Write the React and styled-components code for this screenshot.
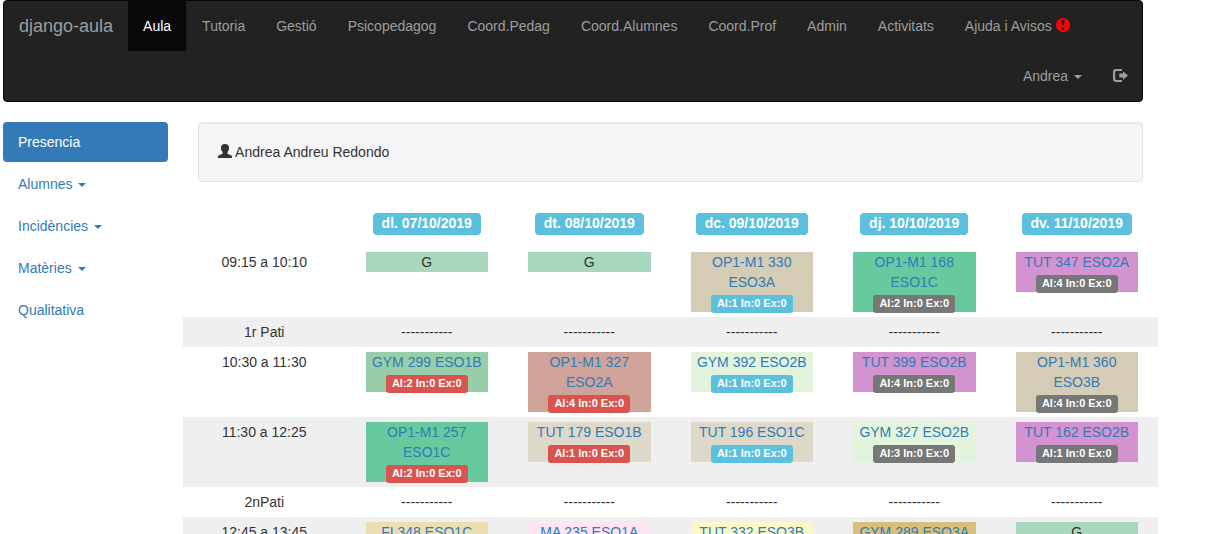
import React from "react";
import styled, { createGlobalStyle } from "styled-components";

const GlobalStyle = createGlobalStyle`
  *, *::before, *::after { box-sizing: border-box; }
  html { scrollbar-width: none; }
  body {
    margin: 0;
    background: #fff;
    color: #333;
    font: 14px/20px "Liberation Sans", Arial, sans-serif;
  }
  a { color: #337ab7; text-decoration: none; }
  ul { list-style: none; margin: 0; padding: 0; }
`;

const Page = styled.div`
  max-width: 1143px;
  padding-left: 3px;
`;

const Navbar = styled.nav`
  display: flex;
  flex-wrap: wrap;
  min-height: 50px;
  margin-bottom: 20px;
  background: #222;
  border: 1px solid #080808;
  border-radius: 4px;
`;

const Brand = styled.a`
  padding: 15px;
  color: #9d9d9d;
  font-size: 18px;
`;

const NavList = styled.ul`
  display: flex;
  gap: 1px;
  margin-left: ${(p) => (p.$end ? "auto" : "0")};
`;

const NavLink = styled.a`
  display: block;
  padding: 15px;
  color: ${(p) => (p.$active ? "#fff" : "#9d9d9d")};
  background: ${(p) => (p.$active ? "#080808" : "transparent")};
  white-space: nowrap;
`;

const Caret = styled.span`
  display: inline-block;
  margin-left: 2px;
  vertical-align: middle;
  border-top: 4px solid;
  border-left: 4px solid transparent;
  border-right: 4px solid transparent;
`;

const Glyph = styled.svg`
  display: inline-block;
  width: 14px;
  height: 14px;
  overflow: visible;
  vertical-align: -1px;
  fill: ${(p) => p.$color || "currentColor"};
`;

const Columns = styled.div`
  display: flex;
  align-items: flex-start;
  gap: 30px;
`;

const Sidebar = styled.ul`
  display: flex;
  flex-direction: column;
  flex: 0 0 165px;
  gap: 2px;
`;

const SideLink = styled.a`
  display: block;
  padding: 10px 15px;
  border-radius: 4px;
  color: ${(p) => (p.$active ? "#fff" : "#337ab7")};
  background: ${(p) => (p.$active ? "#337ab7" : "transparent")};
`;

const Main = styled.main`
  flex: 1;
  min-width: 0;
`;

const Well = styled.div`
  padding: 19px;
  margin-bottom: 20px;
  background: #f5f5f5;
  border: 1px solid #e3e3e3;
  border-radius: 4px;
  box-shadow: inset 0 1px 1px rgba(0, 0, 0, 0.05);
`;

const TableWrap = styled.div`
  margin: 0 -15px;
`;

const Timetable = styled.table`
  width: 100%;
  table-layout: fixed;
  border-collapse: collapse;
  text-align: center;
`;

const Row = styled.tr`
  background: ${(p) => (p.$shaded ? "#efefef" : "transparent")};
`;

const DayHead = styled.th`
  padding: 11px 20px 12px;
`;

const Cell = styled.td`
  padding: 5px 20px;
  vertical-align: top;
`;

const HourCell = styled.th`
  padding: 5px 20px;
  vertical-align: top;
  font-weight: normal;
`;

const DayLabel = styled.span`
  display: inline-block;
  padding: 3px 9px 5px;
  border-radius: 4px;
  color: #fff;
  background: #5bc0de;
  font-size: 14px;
  font-weight: bold;
  line-height: 14px;
  vertical-align: top;
`;

const Lesson = styled.div`
  display: flow-root;
  background: ${(p) => p.$color};
`;

const Count = styled.span`
  display: block;
  width: fit-content;
  margin: 3px auto -1px;
  padding: 3px 6px 4px;
  border-radius: 3px;
  color: #fff;
  background: ${(p) => p.$color};
  font-size: 11px;
  font-weight: bold;
  line-height: 11px;
  white-space: nowrap;
`;

const AlertGlyph = () => (
  <Glyph $color="red" viewBox="23 23 1154 1154" aria-hidden="true">
    <path
      transform="translate(0 1200) scale(1 -1)"
      d="M600 1177q117 0 224 -45.5t184.5 -123t123 -184.5t45.5 -224t-45.5 -224t-123 -184.5t-184.5 -123t-224 -45.5t-224 45.5t-184.5 123t-123 184.5t-45.5 224t45.5 224t123 184.5t184.5 123t224 45.5zM704 1000h-208q-20 0 -32 -14.5t-8 -34.5l58 -302q4 -20 21.5 -34.5t37.5 -14.5h54q20 0 37.5 14.5t21.5 34.5l58 302q4 20 -8 34.5t-32 14.5zM675 400h-150q-10 0 -17.5 -7.5t-7.5 -17.5v-150q0 -10 7.5 -17.5t17.5 -7.5h150q10 0 17.5 7.5t7.5 17.5v150q0 10 -7.5 17.5t-17.5 7.5z"
    />
  </Glyph>
);

const LogoutGlyph = () => (
  <Glyph viewBox="0 0 14 14" aria-hidden="true">
    <path d="M9 1H3a3 3 0 0 0-3 3v7a3 3 0 0 0 3 3h6v-2H3.500a1.300 1.300 0 0 1-1.300-1.300V4.300A1.300 1.300 0 0 1 3.500 3H9zM10 3.300l5 4.200-5 4.200V9.600H6.300V5.400H10z" />
  </Glyph>
);

const UserGlyph = () => (
  <Glyph viewBox="0 0 14 14" aria-hidden="true">
    <path d="M7 0c2.500 0 4.100 1.400 4.100 3.800 0 1.900-.7 3.300-1.700 4.300v1c0 .6.400 1 1 1.200l2.600 1c.7.300 1 .8 1 1.400V14H0v-1.300c0-.6.300-1.100 1-1.400l2.600-1c.6-.2 1-.6 1-1.200v-1c-1-1-1.700-2.400-1.700-4.300C2.900 1.400 4.500 0 7 0z" />
  </Glyph>
);

const menu = ["Aula", "Tutoria", "Gestió", "Psicopedagog", "Coord.Pedag", "Coord.Alumnes", "Coord.Prof", "Admin", "Activitats"];

const sections = [
  { name: "Presencia", active: true },
  { name: "Alumnes", caret: true },
  { name: "Incidències", caret: true },
  { name: "Matèries", caret: true },
  { name: "Qualitativa" },
];

const days = ["dl. 07/10/2019", "dt. 08/10/2019", "dc. 09/10/2019", "dj. 10/10/2019", "dv. 11/10/2019"];

const tones = { info: "#5bc0de", danger: "#d9534f", plain: "#777" };

const guard = { color: "#a9d6be", name: "G" };
const lesson = (name, color, count, tone) => ({ name, color, count, tone });

const hours = [
  {
    time: "09:15 a 10:10",
    lessons: [
      guard,
      guard,
      lesson("OP1-M1 330 ESO3A", "#d4ccb4", "Al:1 In:0 Ex:0", "info"),
      lesson("OP1-M1 168 ESO1C", "#66ca9e", "Al:2 In:0 Ex:0", "plain"),
      lesson("TUT 347 ESO2A", "#d293d0", "Al:4 In:0 Ex:0", "plain"),
    ],
  },
  { time: "1r Pati" },
  {
    time: "10:30 a 11:30",
    lessons: [
      lesson("GYM 299 ESO1B", "#98cdaa", "Al:2 In:0 Ex:0", "danger"),
      lesson("OP1-M1 327 ESO2A", "#d0a39a", "Al:4 In:0 Ex:0", "danger"),
      lesson("GYM 392 ESO2B", "#e2f4dc", "Al:1 In:0 Ex:0", "info"),
      lesson("TUT 399 ESO2B", "#d293d0", "Al:4 In:0 Ex:0", "plain"),
      lesson("OP1-M1 360 ESO3B", "#d4ccb4", "Al:4 In:0 Ex:0", "plain"),
    ],
  },
  {
    time: "11:30 a 12:25",
    lessons: [
      lesson("OP1-M1 257 ESO1C", "#66ca9e", "Al:2 In:0 Ex:0", "danger"),
      lesson("TUT 179 ESO1B", "#ded8c8", "Al:1 In:0 Ex:0", "danger"),
      lesson("TUT 196 ESO1C", "#ded8c8", "Al:1 In:0 Ex:0", "info"),
      lesson("GYM 327 ESO2B", "#e2f4dc", "Al:3 In:0 Ex:0", "plain"),
      lesson("TUT 162 ESO2B", "#d293d0", "Al:1 In:0 Ex:0", "plain"),
    ],
  },
  { time: "2nPati" },
  {
    time: "12:45 a 13:45",
    lessons: [
      lesson("FI 348 ESO1C", "#eadfb2"),
      lesson("MA 235 ESO1A", "#fde5f4"),
      lesson("TUT 332 ESO3B", "#fbf8c8"),
      lesson("GYM 289 ESO3A", "#d8c07c"),
      guard,
    ],
  },
];

export default function App() {
  return (
    <>
      <GlobalStyle />
      <Page>
        <Navbar>
          <Brand href="#">django-aula</Brand>
          <NavList>
            {menu.map((name, i) => (
              <li key={name}>
                <NavLink href="#" $active={i === 0}>{name}</NavLink>
              </li>
            ))}
            <li>
              <NavLink href="#">Ajuda i Avisos <AlertGlyph /></NavLink>
            </li>
          </NavList>
          <NavList $end>
            <li>
              <NavLink href="#">Andrea <Caret /></NavLink>
            </li>
            <li>
              <NavLink href="#" aria-label="Sortir"><LogoutGlyph /></NavLink>
            </li>
          </NavList>
        </Navbar>
        <Columns>
          <Sidebar>
            {sections.map((s) => (
              <li key={s.name}>
                <SideLink href="#" $active={s.active}>
                  {s.name} {s.caret && <Caret />}
                </SideLink>
              </li>
            ))}
          </Sidebar>
          <Main>
            <Well><UserGlyph /> Andrea Andreu Redondo</Well>
            <TableWrap>
              <Timetable>
                <thead>
                  <tr>
                    <td />
                    {days.map((d) => (
                      <DayHead key={d} scope="col"><DayLabel>{d}</DayLabel></DayHead>
                    ))}
                  </tr>
                </thead>
                <tbody>
                  {hours.map((h, i) => (
                    <Row key={h.time} $shaded={i % 2 === 1}>
                      <HourCell scope="row">{h.time}</HourCell>
                      {days.map((d, j) => {
                        const item = h.lessons && h.lessons[j];
                        if (!item) return <Cell key={d}>-----------</Cell>;
                        return (
                          <Cell key={d}>
                            <Lesson $color={item.color}>
                              {item === guard ? item.name : <a href="#">{item.name}</a>}
                              {item.count && <Count $color={tones[item.tone]}>{item.count}</Count>}
                            </Lesson>
                          </Cell>
                        );
                      })}
                    </Row>
                  ))}
                </tbody>
              </Timetable>
            </TableWrap>
          </Main>
        </Columns>
      </Page>
    </>
  );
}
